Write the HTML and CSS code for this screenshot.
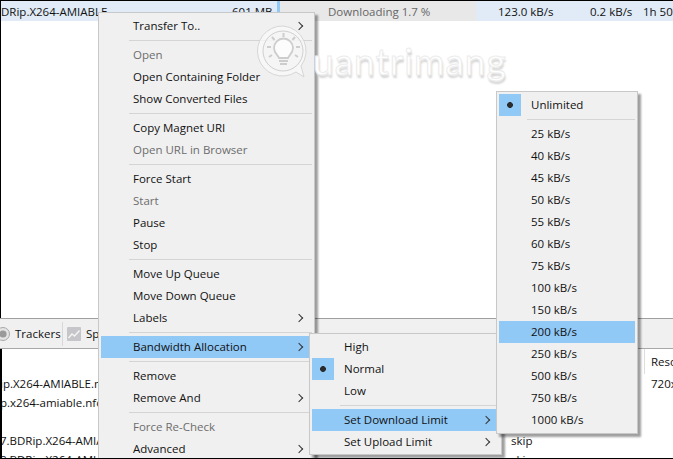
FILE: index.html
```html
<!DOCTYPE html>
<html lang="en">
<head>
<meta charset="utf-8">
<title>Bandwidth Allocation</title>
<link rel="stylesheet" href="styles.css">
</head>
<body>
<div class="app">
  <div class="torrent-row">
    <span class="cell-name">DRip.X264-AMIABLE</span>
    <span class="cell-size">601 MB</span>
    <span class="cell-progress"><i class="progress-fill"></i><span>Downloading 1.7 %</span></span>
    <span class="cell-down">123.0 kB/s</span>
    <span class="cell-up">0.2 kB/s</span>
    <span class="cell-eta">1h 50</span>
  </div>
  <div class="list-space"></div>
  <div class="tabs">
    <span class="tab tab-trackers"><svg class="tab-icon" viewBox="0 0 14 14"><circle cx="7" cy="7" r="6.5" fill="#e4e4e4" stroke="#a8a8a8"/><circle cx="7" cy="7" r="3.6" fill="#9a9a9a"/></svg>Trackers</span>
    <span class="tab"><svg class="tab-icon" viewBox="0 0 14 14"><rect width="14" height="14" rx="1" fill="#c6c6ca"/><path d="M1.5 11l3.5-4 2.500 2 5-5.500" fill="none" stroke="#f4f4f4" stroke-width="1.500"/></svg>Speed</span>
  </div>
  <div class="files">
    <div class="col-name">
      <div class="row">ip.X264-AMIABLE.mkv</div>
      <div class="row">p.x264-amiable.nfo</div>
      <div class="row"></div>
      <div class="row">7.BDRip.X264-AMIABLE</div>
      <div class="row">8.BDRip.X264-AMIABLE</div>
    </div>
    <div class="col-skip">
      <div class="row"></div>
      <div class="row"></div>
      <div class="row"></div>
      <div class="row">skip</div>
      <div class="row">skip</div>
    </div>
    <div class="col-res">
      <div class="res-head">Reso</div>
      <div class="row">720x</div>
    </div>
  </div>
</div>

<nav class="menu menu-main">
  <div class="item sub">Transfer To..</div>
  <hr>
  <div class="item off">Open</div>
  <div class="item">Open Containing Folder</div>
  <div class="item">Show Converted Files</div>
  <hr>
  <div class="item">Copy Magnet URI</div>
  <div class="item off">Open URL in Browser</div>
  <hr>
  <div class="item">Force Start</div>
  <div class="item off">Start</div>
  <div class="item">Pause</div>
  <div class="item">Stop</div>
  <hr>
  <div class="item">Move Up Queue</div>
  <div class="item">Move Down Queue</div>
  <div class="item sub">Labels</div>
  <hr>
  <div class="item sub active">Bandwidth Allocation</div>
  <hr>
  <div class="item">Remove</div>
  <div class="item sub">Remove And</div>
  <hr>
  <div class="item off">Force Re-Check</div>
  <div class="item sub">Advanced</div>
</nav>

<nav class="menu menu-band">
  <div class="item">High</div>
  <div class="item checked">Normal</div>
  <div class="item">Low</div>
  <hr>
  <div class="item sub active">Set Download Limit</div>
  <div class="item sub">Set Upload Limit</div>
</nav>

<nav class="menu menu-limit">
  <div class="item checked">Unlimited</div>
  <hr>
  <div class="item">25 kB/s</div>
  <div class="item">40 kB/s</div>
  <div class="item">45 kB/s</div>
  <div class="item">50 kB/s</div>
  <div class="item">55 kB/s</div>
  <div class="item">60 kB/s</div>
  <div class="item">75 kB/s</div>
  <div class="item">100 kB/s</div>
  <div class="item">150 kB/s</div>
  <div class="item active">200 kB/s</div>
  <div class="item">250 kB/s</div>
  <div class="item">500 kB/s</div>
  <div class="item">750 kB/s</div>
  <div class="item">1000 kB/s</div>
</nav>

<div class="watermark">
  <svg class="wm-logo" viewBox="0 0 56 58">
    <path d="M28 3a25 25 0 1 0 13 46l8 5-3-11A25 25 0 0 0 28 3z" fill="#fafafa" fill-opacity=".75" stroke="#d6d6d6" stroke-width="1"/>
    <circle cx="28" cy="28" r="20" fill="#f4f4f4" fill-opacity=".6" stroke="#cfcfcf" stroke-width="1"/>
    <path d="M24 35c-1-3-5-5-5-10a9.500 9.500 0 0 1 19 0c0 5-4 7-5 10z" fill="#fff" fill-opacity=".7" stroke="#cdcdcd" stroke-width="1.800"/>
    <path d="M24 38h9M25 41h7" stroke="#cdcdcd" stroke-width="1.800"/>
    <path d="M28.500 10v4M17 14l2.500 3M40 14l-2.500 3M12 24h4M41 24h4M14 34l3-2M43 34l-3-2" stroke="#cdcdcd" stroke-width="2"/>
  </svg>
  <span class="wm-text">uantrimang</span>
</div>
</body>
</html>
```
FILE: styles.css
```css
* { box-sizing: border-box; }
html, body { margin: 0; height: 100%; }
body {
  position: relative;
  width: 673px;
  height: 459px;
  overflow: hidden;
  background: #fff;
  font-family: "Open Sans", "Noto Sans", sans-serif;
  font-size: 11.5px;
  color: #111;
}
body::after {
  content: "";
  position: absolute;
  inset: 0;
  border-top: 1px solid #000;
  border-bottom: 1px solid #000;
  pointer-events: none;
}
.app {
  height: 459px;
  display: flex;
  flex-direction: column;
  padding-top: 1px;
}
.torrent-row {
  height: 20px;
  flex: none;
  display: flex;
  align-items: center;
  background: #e0ebf7;
  border-left: 1px solid #000;
  white-space: nowrap;
  overflow: hidden;
}
.torrent-row > span { flex: none; }
.cell-name { width: 198px; }
.cell-size { width: 78px; padding-left: 33px; }
.cell-progress {
  width: 199px;
  align-self: stretch;
  display: flex;
  align-items: center;
  background: #e8e8e8;
  color: #666;
}
.progress-fill { width: 3px; align-self: stretch; background: #90c8f6; margin-right: 48px; }
.cell-down { width: 100px; padding-left: 22px; }
.cell-up { width: 57px; padding-left: 14px; }
.cell-eta { padding-left: 10px; }
.list-space { flex: none; height: 297px; border-left: 1px solid #000; }
.tabs {
  height: 31px;
  flex: none;
  display: flex;
  align-items: center;
  background: #f0f0f0;
  border-top: 1px solid #a0a0a0;
  border-bottom: 1px solid #a8a8a8;
  gap: 4px;
}
.tab {
  display: flex;
  align-items: center;
  gap: 5px;
  white-space: nowrap;
  height: 24px;
}
.tab-trackers {
  flex: none;
  width: 67px;
  margin-left: -4px;
  border-right: 1px solid #d8d8d8;
}
.tab-icon { width: 14px; height: 14px; flex: none; }
.files {
  flex: 1;
  min-height: 0;
  display: flex;
  overflow: hidden;
  border-left: 2px solid #000;
}
.row { height: 19px; line-height: 19px; white-space: nowrap; }
.col-name { flex: none; width: 511px; margin-left: -2px; padding-top: 25px; overflow: hidden; }
.col-skip { flex: none; width: 133px; padding-top: 25px; }
.col-res { flex: none; width: 29px; padding-left: 7px; position: relative; }
.res-head {
  height: 25px;
  line-height: 25px;
  margin-left: -7px;
  padding-left: 6px;
  border-left: 1px solid #ddd;
  white-space: nowrap;
}

.menu {
  position: absolute;
  background: #f0f0f0;
  border: 1px solid #c8c8c8;
  box-shadow: 3px 3px 2px rgba(0, 0, 0, .38);
  padding: 2px;
}
.menu-main { left: 98px; top: 12px; width: 217px; height: 447px; overflow: hidden; padding-bottom: 0; border-bottom: 0; }
.menu-band { left: 309px; top: 333px; width: 193px; height: 122px; }
.menu-limit { left: 496px; top: 91px; width: 142px; height: 343px; }
.item {
  position: relative;
  height: 22px;
  line-height: 22px;
  padding-left: 32px;
  white-space: nowrap;
}
.item.off { color: #6d6d6d; }
.item.active { background: #90c8f6; }
.item.sub::after {
  content: "";
  position: absolute;
  right: 10px;
  top: 8px;
  width: 5px;
  height: 5px;
  border-top: 1px solid #333;
  border-right: 1px solid #333;
  transform: rotate(45deg);
}
.item.checked::before {
  content: "";
  position: absolute;
  left: 0;
  top: 0;
  width: 22px;
  height: 22px;
  background: radial-gradient(circle, #2b2b2b 0 2.6px, transparent 3.2px), #90c8f6;
}
.menu hr {
  height: 1px;
  border: 0;
  background: #d4d4d4;
  margin: 3px 0 3px 28px;
}
.watermark {
  position: absolute;
  left: 255px;
  top: 23px;
  display: flex;
  align-items: flex-start;
  pointer-events: none;
}
.wm-logo { width: 56px; height: 58px; flex: none; }
.wm-text {
  font-family: "Lato", sans-serif;
  font-size: 37px;
  line-height: 50px;
  letter-spacing: 1px;
  color: #fff;
  -webkit-text-stroke: 1px #ececec;
  text-shadow: 1px 3px 2px #d4d4d4;
  margin: 13px 0 0 2px;
}
```
